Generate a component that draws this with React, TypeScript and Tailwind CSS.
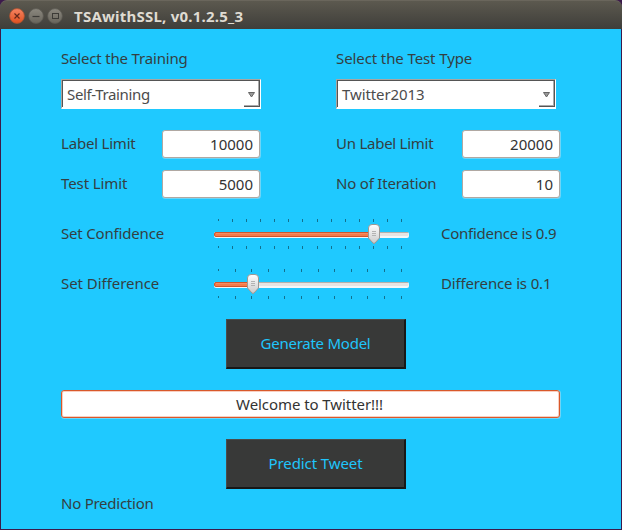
import type { ReactNode } from "react";

function WindowButton({ kind }: { kind: "close" | "min" | "max" }) {
  const close = kind === "close";
  return (
    <svg width="16" height="16" viewBox="0 0 16 16" className="block">
      <defs>
        <linearGradient id={`wb-${kind}`} x1="0" y1="0" x2="0" y2="1">
          <stop offset="0" stopColor={close ? "#f58462" : "#8b887f"} />
          <stop offset="1" stopColor={close ? "#e0501f" : "#68655c"} />
        </linearGradient>
      </defs>
      <circle cx="8" cy="8" r="7.4" fill={`url(#wb-${kind})`} stroke={close ? "#a9502e" : "#5b5850"} strokeWidth="0.8" />
      <g fill="none" stroke={close ? "#64281a" : "#3c3b37"} strokeWidth="1.2">
        {kind === "close" && <path d="M5.5 5.5 L10.5 10.5 M10.5 5.5 L5.5 10.5" />}
        {kind === "min" && <path d="M4.5 8.5 H11.5" />}
        {kind === "max" && <rect x="5.5" y="5.5" width="6" height="5" strokeWidth="1" />}
      </g>
    </svg>
  );
}

function Label({ className = "", children }: { className?: string; children: ReactNode }) {
  return <span className={`mb-[2px] shrink-0 whitespace-nowrap ${className}`}>{children}</span>;
}

function Combo({ className, textClass, value }: { className: string; textClass: string; value: string }) {
  return (
    <div className={`h-[30px] shrink-0 border border-t-[#a9a5a0] border-l-[#a9a5a0] border-r-white border-b-white bg-white ${className}`}>
      <div className="flex h-[27px] justify-between border-t border-l border-[#555] pl-1">
        <span className={`leading-[26px] whitespace-nowrap text-[#4c4c4c] ${textClass}`}>{value}</span>
        <div className="flex h-[26px] w-4 items-center justify-center border-r border-b border-[#555]">
          <div className="flex h-[25px] w-[15px] items-center justify-center border-r border-b border-[#aaa]">
            <svg width="7" height="6" viewBox="0 0 7 6" className="mt-1 block">
              <path d="M0.5 0.5 H6.5 L3.5 5 Z" fill="#999" stroke="#666" />
            </svg>
          </div>
        </div>
      </div>
    </div>
  );
}

function Field({ value }: { value: string }) {
  return (
    <div className="h-[28px] w-[98px] shrink-0 rounded-[3px] border border-[#b0a8a2] bg-white pr-[6px] text-right leading-[26px] text-[#333] shadow-[0.5px_0.5px_0_0.5px_rgba(190,225,240,0.5)]">
      {value}
    </div>
  );
}

function Ticks({ marks }: { marks: number[] }) {
  return (
    <svg width="196" height="3" viewBox="0 0 196 3" className="block" shapeRendering="crispEdges">
      {marks.map((x, i) => (
        <rect key={x} x={x} y="0" width="1" height={i === 0 ? 2 : 3} fill="#12718f" />
      ))}
    </svg>
  );
}

function Slider({ id, marks, thumb }: { id: string; marks: number[]; thumb: number }) {
  return (
    <div className="h-[30px] w-[196px] shrink-0">
      <Ticks marks={marks} />
      <svg width="196" height="24" viewBox="0 0 196 24" className="block">
        <defs>
          <linearGradient id={id} x1="0" y1="0" x2="0" y2="1">
            <stop offset="0" stopColor="#ffffff" />
            <stop offset="1" stopColor="#c9c9c9" />
          </linearGradient>
        </defs>
        <rect x="0" y="10" width="195" height="6" rx="2" fill="#f4f6f7" />
        <rect x="0.5" y="10.5" width="194" height="3.5" rx="1.5" fill="#e5e4e2" />
        <path d="M1 10.5 H194" stroke="#b5b0ab" />
        <rect x="0.5" y="10.5" width={thumb} height="4" rx="1.5" fill="#f37b4b" stroke="#d0562b" />
        <path d={`M2 11.5 H${thumb}`} stroke="#f68d62" />
        <g transform={`translate(${thumb} 2)`}>
          <path d="M-5.5 4 Q-5.5 0.5 -2 0.5 H2 Q5.5 0.5 5.5 4 V14 L1 19 Q0 20 -1 19 L-5.5 14 Z" fill={`url(#${id})`} stroke="#9c9894" />
          <path d="M-2 7.5 H2 M-2 9.5 H2 M-2 11.5 H2" stroke="#b3b3b3" />
        </g>
      </svg>
      <Ticks marks={marks} />
    </div>
  );
}

function ActionButton({ className, children }: { className: string; children: ReactNode }) {
  return (
    <button className={`mx-auto block h-[50px] w-[180px] border-t border-r-2 border-b-2 border-l border-t-[#4a4c4b] border-r-[#171818] border-b-[#171818] border-l-[#4a4c4b] bg-[#383938] text-center text-[#1fc5fb] ${className}`}>
      {children}
    </button>
  );
}

const confidenceMarks = [4, 18, 32, 46, 60, 74, 88, 103, 117, 131, 145, 159, 173, 187];
const differenceMarks = [4, 21, 37, 54, 70, 87, 104, 120, 137, 153, 170, 187];

export default function App() {
  return (
    <div className="h-[530px] w-[622px] overflow-hidden bg-[#3c1a4b] font-['Noto_Sans',sans-serif] text-[15px] text-[#343f42]">
      <header className="flex h-[29px] items-center gap-[3px] rounded-t-[7px] border-t border-[#6a665c] bg-linear-to-b from-[#5c594f] to-[#3f3e3a] pt-px pl-[9px]">
        <WindowButton kind="close" />
        <WindowButton kind="min" />
        <WindowButton kind="max" />
        <h1 className="ml-2 text-[15px] leading-5 font-bold tracking-[0.23px] whitespace-nowrap text-[#dfdbd2]">TSAwithSSL, v0.1.2.5_3</h1>
      </header>
      <main className="mx-px h-[500px] bg-[#1fc9ff] px-[60px] pt-[20px]">
        <div className="flex h-5 items-center">
          <Label className="w-[275px] tracking-[-0.18px]">Select the Training</Label>
          <Label className="tracking-[-0.1px]">Select the Test Type</Label>
        </div>
        <div className="mt-[10px] flex gap-[75px]">
          <Combo className="w-[200px]" textClass="tracking-[-0.35px]" value="Self-Training" />
          <Combo className="w-[220px]" textClass="tracking-[-0.1px]" value="Twitter2013" />
        </div>
        <div className="mt-[21px] flex h-[28px] items-center">
          <Label className="w-[101px] tracking-[-0.2px]">Label Limit</Label>
          <Field value="10000" />
          <Label className="ml-[76px] w-[126px] tracking-[-0.25px]">Un Label Limit</Label>
          <Field value="20000" />
        </div>
        <div className="mt-[12px] flex h-[28px] items-center">
          <Label className="w-[101px] tracking-[-0.1px]">Test Limit</Label>
          <Field value="5000" />
          <Label className="ml-[76px] w-[126px] tracking-[-0.2px]">No of Iteration</Label>
          <Field value="10" />
        </div>
        <div className="mt-[21px] flex h-[30px] items-center">
          <Label className="w-[153px] tracking-[-0.18px]">Set Confidence</Label>
          <Slider id="confidence" marks={confidenceMarks} thumb={160} />
          <Label className="ml-[31px] tracking-[-0.25px]">Confidence is 0.9</Label>
        </div>
        <div className="mt-[20px] flex h-[30px] items-center">
          <Label className="w-[153px] tracking-[-0.05px]">Set Difference</Label>
          <Slider id="difference" marks={differenceMarks} thumb={39} />
          <Label className="ml-[31px] tracking-[-0.15px]">Difference is 0.1</Label>
        </div>
        <div className="mt-[20px] w-[510px]">
          <ActionButton className="tracking-[-0.25px]">Generate Model</ActionButton>
        </div>
        <div className="mt-[21px] h-[28px] w-[499px] rounded-[3px] border border-[#d8592b] bg-white pr-[2px] text-center leading-[27px] tracking-[-0.07px] text-[#333] shadow-[inset_0_0_0_1px_#f9cfc0,0.5px_0.5px_0_0.5px_rgba(190,225,240,0.5)]">
          Welcome to Twitter!!!
        </div>
        <div className="mt-[21px] w-[510px]">
          <ActionButton className="tracking-[-0.1px]">Predict Tweet</ActionButton>
        </div>
        <div className="mt-[5px] flex h-5 items-center">
          <Label className="tracking-[-0.25px]">No Prediction</Label>
        </div>
      </main>
    </div>
  );
}
